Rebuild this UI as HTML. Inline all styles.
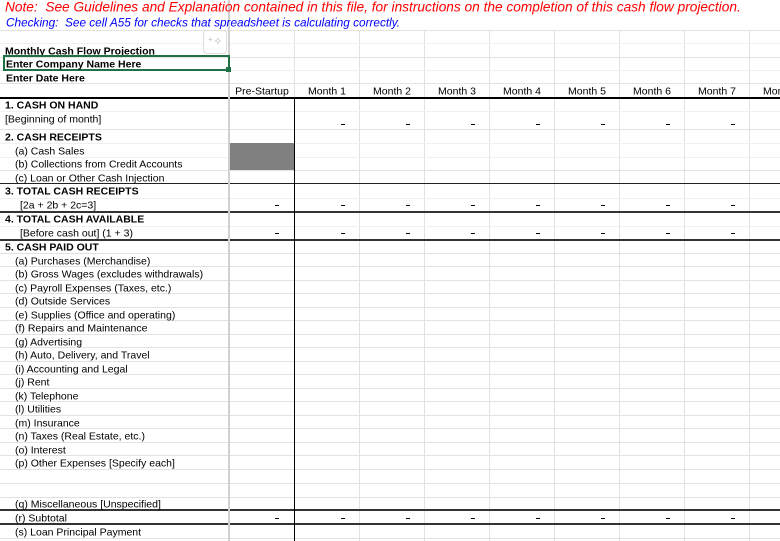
<!DOCTYPE html>
<html><head><meta charset="utf-8"><style>
*{margin:0;padding:0;box-sizing:border-box}
body{width:780px;height:541px;overflow:hidden;background:#fff;position:relative;font-family:"Liberation Sans",Arial,sans-serif;font-size:10.5px;color:#000}
.a{position:absolute;white-space:nowrap}
.h{position:absolute;left:0;width:780px;height:1px;background:#e2e2e2}
.k{position:absolute;left:0;width:780px;height:2px;background:#333}
.v{position:absolute;width:1px;background:#e2e2e2;top:30px;height:511px}
.t{position:absolute;white-space:nowrap;height:14px;line-height:14px;transform:translateY(1.5px)}
.b{font-weight:bold}
.d{position:absolute;width:4px;height:1px;background:#000}
</style></head><body>
<div class="v" style="left:359px"></div><div class="v" style="left:424px"></div><div class="v" style="left:489px"></div><div class="v" style="left:554px"></div><div class="v" style="left:619px"></div><div class="v" style="left:684px"></div><div class="v" style="left:749px"></div>
<div class="v" style="left:294px;top:30px;height:67px"></div>
<div class="h" style="top:30px"></div><div class="h" style="top:43px;background:#f0f0f0"></div><div class="h" style="top:57px"></div><div class="h" style="top:70px;background:#f0f0f0"></div><div class="h" style="top:83px"></div>
<div class="h" style="top:97px;height:2px;background:#000"></div>
<div class="h" style="top:111px;background:#f0f0f0"></div><div class="h" style="top:129px"></div><div class="h" style="top:143px;background:#f0f0f0"></div><div class="h" style="top:157px;background:#f0f0f0"></div><div class="h" style="top:170px"></div>
<div class="h" style="top:183px;background:#222"></div>
<div class="h" style="top:198px;background:#f0f0f0"></div>
<div class="k" style="top:211px"></div>
<div class="h" style="top:226px;background:#f0f0f0"></div>
<div class="k" style="top:239px"></div>
<div class="h" style="top:253px"></div><div class="h" style="top:266px"></div><div class="h" style="top:280px"></div><div class="h" style="top:293px"></div><div class="h" style="top:307px"></div><div class="h" style="top:320px"></div><div class="h" style="top:334px"></div><div class="h" style="top:347px"></div><div class="h" style="top:361px"></div><div class="h" style="top:374px"></div><div class="h" style="top:388px"></div><div class="h" style="top:401px"></div><div class="h" style="top:415px"></div><div class="h" style="top:428px"></div><div class="h" style="top:442px"></div><div class="h" style="top:455px"></div><div class="h" style="top:469px"></div><div class="h" style="top:483px"></div><div class="h" style="top:497px"></div>
<div class="k" style="top:509px"></div>
<div class="k" style="top:523px"></div>
<div class="h" style="top:538px"></div>
<div class="a" style="left:228px;top:143px;width:66px;height:27px;background:#808080"></div>
<div class="a" style="left:294px;top:97px;width:1px;height:444px;background:#000"></div>
<div class="a" style="left:228px;top:0;width:2px;height:541px;background:#d0d0d0"></div>
<div class="t" style="left:5px;top:-1px;color:#ff0000;font-style:italic;font-size:13.7px">Note:&nbsp; See Guidelines and Explanation contained in this file, for instructions on the completion of this cash flow projection.</div>
<div class="t" style="left:6px;top:14px;color:#0000ff;font-style:italic;font-size:11.8px">Checking:&nbsp; See cell A55 for checks that spreadsheet is calculating correctly.</div>
<div class="a" style="left:203px;top:30px;width:24px;height:24px;border:1px solid #ddd;border-radius:4px;background:#fff;color:#bbb;font-size:11px;line-height:22px;text-align:center">⁺✧</div>
<div class="t b" style="left:5px;top:43px">Monthly Cash Flow Projection</div>
<div class="a" style="left:3px;top:55px;width:227px;height:16px;border:2px solid #1e7145"></div>
<div class="a" style="left:226px;top:67px;width:5px;height:5px;background:#1e7145"></div>
<div class="t b" style="left:6px;top:56px">Enter Company Name Here</div>
<div class="t b" style="left:6px;top:70px">Enter Date Here</div>
<div class="t" style="left:230px;width:64px;text-align:center;top:83px">Pre-Startup</div>
<div class="t" style="left:295px;width:64px;text-align:center;top:83px">Month 1</div>
<div class="t" style="left:360px;width:64px;text-align:center;top:83px">Month 2</div>
<div class="t" style="left:425px;width:64px;text-align:center;top:83px">Month 3</div>
<div class="t" style="left:490px;width:64px;text-align:center;top:83px">Month 4</div>
<div class="t" style="left:555px;width:64px;text-align:center;top:83px">Month 5</div>
<div class="t" style="left:620px;width:64px;text-align:center;top:83px">Month 6</div>
<div class="t" style="left:685px;width:64px;text-align:center;top:83px">Month 7</div>
<div class="t" style="left:763px;top:83px">Mon</div>
<div class="t b" style="left:5px;top:97px">1. CASH ON HAND</div>
<div class="t" style="left:5px;top:111px">[Beginning of month]</div>
<div class="t b" style="left:5px;top:129px">2. CASH RECEIPTS</div>
<div class="t" style="left:15px;top:143px">(a) Cash Sales</div>
<div class="t" style="left:15px;top:156px">(b) Collections from Credit Accounts</div>
<div class="t" style="left:15px;top:170px">(c) Loan or Other Cash Injection</div>
<div class="t b" style="left:5px;top:183px">3. TOTAL CASH RECEIPTS</div>
<div class="t" style="left:20px;top:197px">[2a + 2b + 2c=3]</div>
<div class="t b" style="left:5px;top:211px">4. TOTAL CASH AVAILABLE</div>
<div class="t" style="left:20px;top:225px">[Before cash out] (1 + 3)</div>
<div class="t b" style="left:5px;top:239px">5. CASH PAID OUT</div>
<div class="t" style="left:15px;top:253px">(a) Purchases (Merchandise)</div>
<div class="t" style="left:15px;top:266px">(b) Gross Wages (excludes withdrawals)</div>
<div class="t" style="left:15px;top:280px">(c) Payroll Expenses (Taxes, etc.)</div>
<div class="t" style="left:15px;top:293px">(d) Outside Services</div>
<div class="t" style="left:15px;top:307px">(e) Supplies (Office and operating)</div>
<div class="t" style="left:15px;top:320px">(f) Repairs and Maintenance</div>
<div class="t" style="left:15px;top:334px">(g) Advertising</div>
<div class="t" style="left:15px;top:347px">(h) Auto, Delivery, and Travel</div>
<div class="t" style="left:15px;top:361px">(i) Accounting and Legal</div>
<div class="t" style="left:15px;top:374px">(j) Rent</div>
<div class="t" style="left:15px;top:388px">(k) Telephone</div>
<div class="t" style="left:15px;top:401px">(l) Utilities</div>
<div class="t" style="left:15px;top:415px">(m) Insurance</div>
<div class="t" style="left:15px;top:428px">(n) Taxes (Real Estate, etc.)</div>
<div class="t" style="left:15px;top:442px">(o) Interest</div>
<div class="t" style="left:15px;top:455px">(p) Other Expenses [Specify each]</div>
<div class="t" style="left:15px;top:496px">(q) Miscellaneous [Unspecified]</div>
<div class="t" style="left:15px;top:510px">(r) Subtotal</div>
<div class="t" style="left:15px;top:524px">(s) Loan Principal Payment</div>
<div class="d" style="left:341px;top:124px"></div><div class="d" style="left:406px;top:124px"></div><div class="d" style="left:471px;top:124px"></div><div class="d" style="left:536px;top:124px"></div><div class="d" style="left:601px;top:124px"></div><div class="d" style="left:666px;top:124px"></div><div class="d" style="left:731px;top:124px"></div>
<div class="d" style="left:275px;top:205px"></div><div class="d" style="left:341px;top:205px"></div><div class="d" style="left:406px;top:205px"></div><div class="d" style="left:471px;top:205px"></div><div class="d" style="left:536px;top:205px"></div><div class="d" style="left:601px;top:205px"></div><div class="d" style="left:666px;top:205px"></div><div class="d" style="left:731px;top:205px"></div>
<div class="d" style="left:275px;top:233px"></div><div class="d" style="left:341px;top:233px"></div><div class="d" style="left:406px;top:233px"></div><div class="d" style="left:471px;top:233px"></div><div class="d" style="left:536px;top:233px"></div><div class="d" style="left:601px;top:233px"></div><div class="d" style="left:666px;top:233px"></div><div class="d" style="left:731px;top:233px"></div>
<div class="d" style="left:275px;top:518px"></div><div class="d" style="left:341px;top:518px"></div><div class="d" style="left:406px;top:518px"></div><div class="d" style="left:471px;top:518px"></div><div class="d" style="left:536px;top:518px"></div><div class="d" style="left:601px;top:518px"></div><div class="d" style="left:666px;top:518px"></div><div class="d" style="left:731px;top:518px"></div>
</body></html>
